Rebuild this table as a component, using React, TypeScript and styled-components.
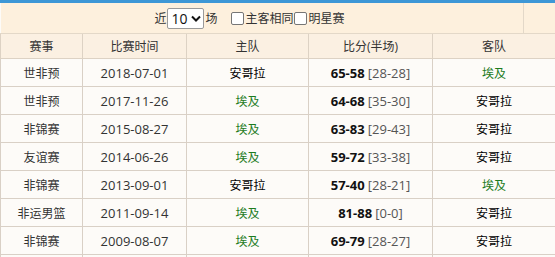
import React from 'react'
import styled, { createGlobalStyle } from 'styled-components'

const GlobalStyle = createGlobalStyle`
  body {
    margin: 0;
    background: #fdfbf8;
    font-family: "Open Sans", "Noto Sans CJK SC", sans-serif;
    font-size: 12px;
    color: #333;
    overflow: hidden;
  }
`

const TopBar = styled.div`
  height: 3px;
  background: #3d97d6;
`

const Table = styled.table`
  width: 555px;
  border-collapse: collapse;
  table-layout: fixed;
`

const FilterCell = styled.td`
  height: 30px;
  padding: 0;
  background: #fdf0dd;
  border-bottom: 1px solid #e3d8c8;
`

const FilterInner = styled.div`
  width: 523px;
  height: 30px;
  display: flex;
  align-items: center;
  justify-content: center;
  padding-right: 24px;
  box-sizing: border-box;
  border-right: 1px solid #e3d8c8;
`

const Select = styled.div`
  display: flex;
  align-items: center;
  gap: 4px;
  height: 21px;
  padding: 0 2px 0 3px;
  margin: 0 1px;
  background: #fff;
  border: 1px solid #9a9a9a;
  border-radius: 2px;
  font-size: 14px;
  color: #111;
  box-sizing: border-box;
`

const Box = styled.span<{ $gap: number }>`
  width: 11px;
  height: 11px;
  border: 1px solid #767676;
  border-radius: 2px;
  background: #fff;
  margin: 0 2px 0 ${p => p.$gap}px;
`

const Th = styled.th`
  height: 24px;
  padding: 0;
  font-weight: normal;
  background: #fbf0e2;
  border: 1px solid #ddd2c4;
  border-top: none;
  color: #333;
`

const Td = styled.td`
  height: 27px;
  padding: 0;
  text-align: center;
  border: 1px solid #d9d0c6;
  background: #fdfbf8;
`

const Num = styled.span`
  font-size: 13px;
`

const Team = styled.span<{ $home: boolean }>`
  color: ${p => (p.$home ? '#1e7b1e' : '#000')};
`

const Score = styled.b`
  font-size: 13px;
  color: #111;
`

const Half = styled.span`
  font-size: 13px;
  color: #555;
`

type Game = [string, string, string, string, string, string]

const games: Game[] = [
  ['世非预', '2018-07-01', '安哥拉', '65-58', '28-28', '埃及'],
  ['世非预', '2017-11-26', '埃及', '64-68', '35-30', '安哥拉'],
  ['非锦赛', '2015-08-27', '埃及', '63-83', '29-43', '安哥拉'],
  ['友谊赛', '2014-06-26', '埃及', '59-72', '33-38', '安哥拉'],
  ['非锦赛', '2013-09-01', '安哥拉', '57-40', '28-21', '埃及'],
  ['非运男篮', '2011-09-14', '埃及', '81-88', '0-0', '安哥拉'],
  ['非锦赛', '2009-08-07', '埃及', '69-79', '28-27', '安哥拉'],
]

const App: React.FC = () => {
  return (
    <>
      <GlobalStyle />
      <TopBar />
      <Table>
        <colgroup>
          <col style={{ width: 82 }} />
          <col style={{ width: 104 }} />
          <col style={{ width: 122 }} />
          <col style={{ width: 124 }} />
          <col style={{ width: 123 }} />
        </colgroup>
        <tbody>
          <tr>
            <FilterCell colSpan={5}>
              <FilterInner>
                近
                <Select>
                  10
                  <svg width="10" height="7" viewBox="0 0 10 7">
                    <path d="M1 1.5 L5 5.5 L9 1.5" fill="none" stroke="#111" strokeWidth="2" />
                  </svg>
                </Select>
                场<Box $gap={13} />主客相同<Box $gap={0} />明星赛
              </FilterInner>
            </FilterCell>
          </tr>
          <tr>
            <Th>赛事</Th>
            <Th>比赛时间</Th>
            <Th>主队</Th>
            <Th>比分(半场)</Th>
            <Th>客队</Th>
          </tr>
          {games.map((g, i) => (
            <tr key={i}>
              <Td>{g[0]}</Td>
              <Td><Num>{g[1]}</Num></Td>
              <Td><Team $home={g[2] === '埃及'}>{g[2]}</Team></Td>
              <Td><Score>{g[3]}</Score> <Half>[{g[4]}]</Half></Td>
              <Td><Team $home={g[5] === '埃及'}>{g[5]}</Team></Td>
            </tr>
          ))}
          <tr>
            <Td>&nbsp;</Td>
            <Td />
            <Td />
            <Td />
            <Td />
          </tr>
        </tbody>
      </Table>
    </>
  )
}

export default App
